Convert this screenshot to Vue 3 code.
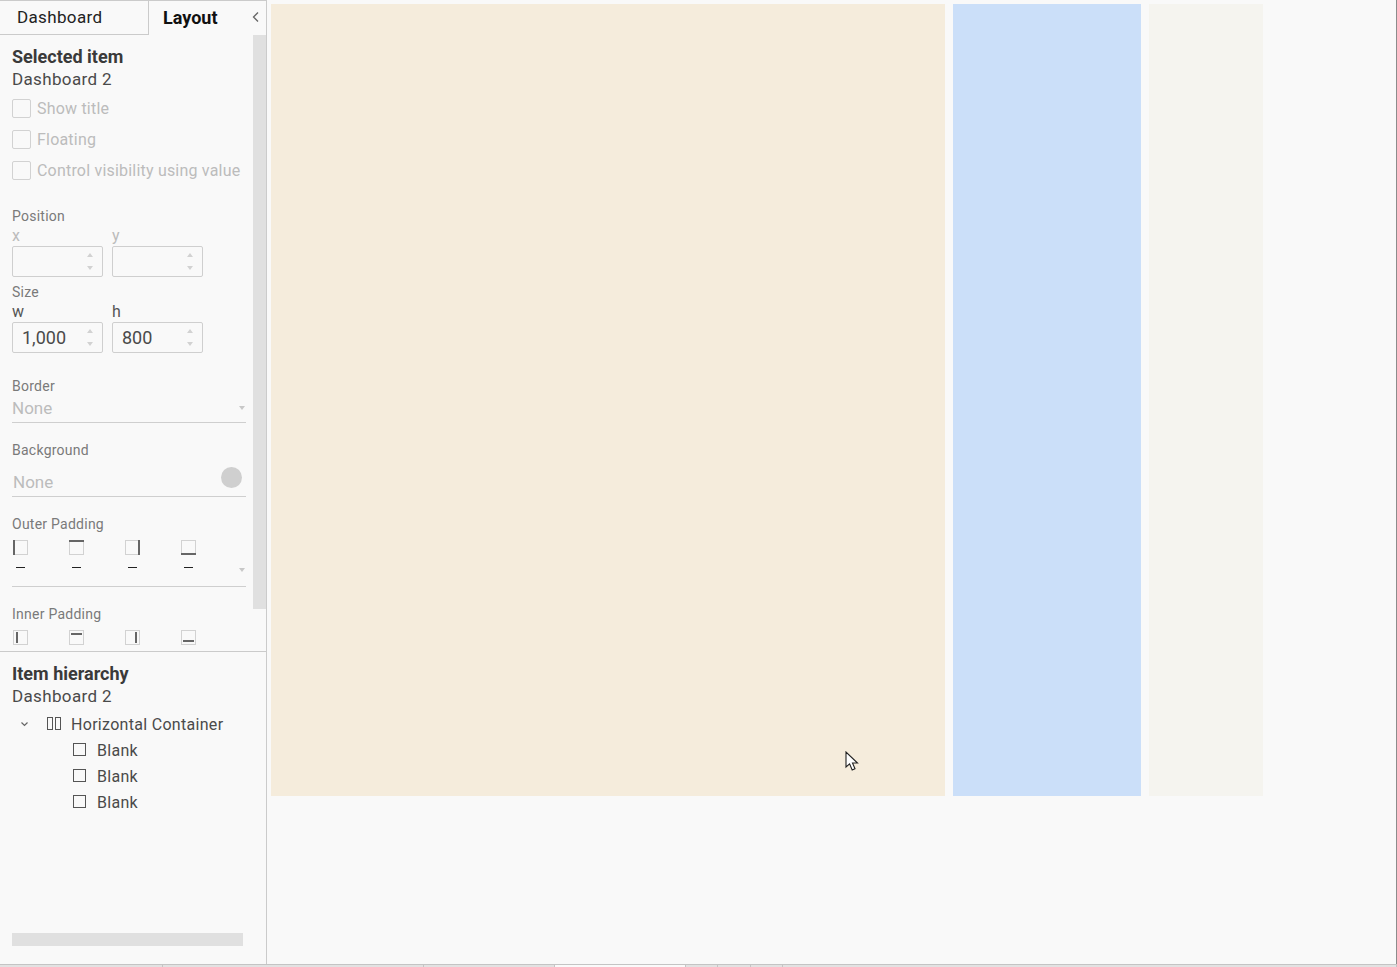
<template>
  <div class="page">
    <div class="main">
      <aside class="sidebar">
        <div class="tabs">
          <div class="tab tab-off">Dashboard</div>
          <div class="tab tab-on">Layout</div>
          <svg class="collapse" width="8" height="12" viewBox="0 0 8 12">
            <path d="M6 1.5 L1.5 6 L6 10.5" fill="none" stroke="#666" stroke-width="1.3" />
          </svg>
        </div>

        <div class="props">
          <div class="props-body">
            <div class="heading">Selected item</div>
            <div class="sub">Dashboard 2</div>

            <div class="checks">
              <label v-for="c in checks" :key="c" class="check">
                <span class="box"></span>
                <span>{{ c }}</span>
              </label>
            </div>

            <div class="label label-position">Position</div>
            <div class="pair pair-first">
              <div v-for="f in position" :key="f.name" class="field">
                <div class="field-name muted">{{ f.name }}</div>
                <div class="spin">
                  <span class="spin-val"></span>
                  <span class="arrows"><i class="up"></i><i class="down"></i></span>
                </div>
              </div>
            </div>

            <div class="label label-size">Size</div>
            <div class="pair pair-first">
              <div v-for="f in size" :key="f.name" class="field">
                <div class="field-name">{{ f.name }}</div>
                <div class="spin">
                  <span class="spin-val">{{ f.value }}</span>
                  <span class="arrows"><i class="up"></i><i class="down"></i></span>
                </div>
              </div>
            </div>

            <div class="label label-border">Border</div>
            <div class="select select-border">
              <span>None</span>
              <i class="caret"></i>
            </div>

            <div class="label label-gap">Background</div>
            <div class="select select-bg">
              <span class="bg-none">None</span>
              <span class="swatch"></span>
            </div>

            <div class="label label-gap">Outer Padding</div>
            <div class="pad-icons">
              <svg v-for="p in outerPad" :key="p" width="15" height="15" viewBox="0 0 15 15">
                <rect x="0.5" y="0.5" width="14" height="14" fill="none" stroke="#aaa" stroke-dasharray="1 1" />
                <path :d="p" stroke="#666" stroke-width="2" fill="none" />
              </svg>
            </div>
            <div class="pad-values">
              <span v-for="n in 4" :key="n" class="dash"></span>
              <i class="caret pad-caret"></i>
            </div>

            <div class="label label-gap">Inner Padding</div>
            <div class="pad-icons">
              <svg v-for="p in innerPad" :key="p" width="15" height="15" viewBox="0 0 15 15">
                <rect x="0.5" y="0.5" width="14" height="14" fill="none" stroke="#aaa" stroke-dasharray="1 1" />
                <path :d="p" stroke="#666" stroke-width="2" fill="none" />
              </svg>
            </div>
          </div>
          <div class="scroll-y"></div>
        </div>

        <div class="hierarchy">
          <div class="heading">Item hierarchy</div>
          <div class="sub">Dashboard 2</div>
          <div class="tree">
            <div class="tree-row">
              <svg class="tree-chevron" width="7" height="5" viewBox="0 0 7 5">
                <path d="M0.5 0.5 L3.5 3.5 L6.5 0.5" fill="none" stroke="#666" stroke-width="1.2" />
              </svg>
              <svg class="tree-columns" width="14" height="13" viewBox="0 0 14 13">
                <rect x="0.5" y="0.5" width="5" height="12" fill="none" stroke="#555" />
                <rect x="8.5" y="0.5" width="5" height="12" fill="none" stroke="#555" />
              </svg>
              <span>Horizontal Container</span>
            </div>
            <div v-for="n in 3" :key="n" class="tree-row tree-leaf">
              <span class="leaf-box"></span>
              <span>Blank</span>
            </div>
          </div>
        </div>

        <div class="scroll-x"></div>
      </aside>

      <section class="canvas">
        <div class="frame">
          <div class="block block-tan"></div>
          <div class="block block-blue"></div>
          <div class="block block-pale"></div>
        </div>
        <svg class="cursor" width="15" height="21" viewBox="0 0 15 21">
          <path d="M1 1 L1 16 L4.6 12.8 L7.2 19 L10 17.8 L7.5 12 L12.5 12 Z" fill="#fff" stroke="#222" stroke-width="1.1" stroke-linejoin="miter" />
        </svg>
      </section>
    </div>

    <div class="strip">
      <span v-for="t in sheetTabs" :key="t.id" class="strip-tab" :class="{ active: t.active }" :style="{ width: t.w + 'px' }"></span>
    </div>
  </div>
</template>

<script setup>
const checks = ['Show title', 'Floating', 'Control visibility using value']
const position = [{ name: 'x' }, { name: 'y' }]
const size = [
  { name: 'w', value: '1,000' },
  { name: 'h', value: '800' },
]
const outerPad = ['M1 0 V15', 'M0 1 H15', 'M14 0 V15', 'M0 14 H15']
const innerPad = ['M4 2 V13', 'M2 4 H13', 'M11 2 V13', 'M2 11 H13']
const sheetTabs = [
  { id: 1, w: 163 },
  { id: 2, w: 261 },
  { id: 3, w: 131 },
  { id: 4, w: 131, active: true },
  { id: 5, w: 32 },
  { id: 6, w: 33 },
  { id: 7, w: 32 },
  { id: 8, w: 614 },
]
</script>

<style>
html,
body {
  margin: 0;
  background: #f9f9f9;
  overflow: hidden;
}
</style>

<style scoped>
.page {
  height: 967px;
  display: flex;
  flex-direction: column;
  background: #f9f9f9;
  font-family: Roboto, "Liberation Sans", sans-serif;
  color: #444;
}

.main {
  flex: 1;
  display: flex;
  min-height: 0;
  border-right: 1px solid #8c8c8c;
}

.sidebar {
  width: 266px;
  flex: none;
  display: flex;
  flex-direction: column;
  border-right: 1px solid #cbcbcb;
}

.tabs {
  height: 34px;
  flex: none;
  display: flex;
  position: relative;
  border-top: 1px solid #cbcbcb;
}

.tab {
  font-size: 17px;
  line-height: 33px;
}

.tab-off {
  width: 131px;
  padding-left: 17px;
  border-right: 1px solid #cbcbcb;
  border-bottom: 1px solid #cbcbcb;
  color: #222;
  letter-spacing: 0.35px;
}

.tab-on {
  padding-left: 14px;
  font-size: 18px;
  font-weight: 700;
  color: #111;
}

.collapse {
  position: absolute;
  right: 6px;
  top: 10px;
}

.props {
  height: 616px;
  flex: none;
  display: flex;
  overflow: hidden;
  border-bottom: 1px solid #cbcbcb;
}

.props-body {
  flex: 1;
  padding: 11px 7px 0 12px;
}

.scroll-y {
  width: 13px;
  height: 574px;
  flex: none;
  background: #e0e0e0;
}

.heading {
  font-size: 18px;
  font-weight: 700;
  line-height: 22px;
  color: #3a3a3a;
}

.sub {
  font-size: 17px;
  line-height: 22px;
  color: #4a4a4a;
  letter-spacing: 0.35px;
}

.checks {
  margin-top: 9px;
  display: flex;
  flex-direction: column;
  gap: 12px;
}

.check {
  display: flex;
  align-items: center;
  gap: 6px;
  height: 19px;
  font-size: 16px;
  letter-spacing: 0.2px;
  color: #bcbcbc;
  white-space: nowrap;
}

.box {
  width: 17px;
  height: 17px;
  border: 1px solid #d2d2d2;
  border-radius: 2px;
}

.label {
  font-size: 14px;
  line-height: 18px;
  letter-spacing: 0.25px;
  color: #7a7a7a;
}

.label-position {
  margin-top: 27px;
}

.label-size {
  margin-top: 6px;
}

.label-border {
  margin-top: 24px;
}

.label-gap {
  margin-top: 18px;
}

.pair {
  display: flex;
  gap: 9px;
}

.pair-first {
  margin-top: 2px;
}

.field {
  width: 91px;
}

.field-name {
  font-size: 16px;
  line-height: 18px;
  margin-bottom: 1px;
  color: #555;
}

.field-name.muted {
  color: #bcbcbc;
}

.spin {
  height: 29px;
  border: 1px solid #cfcfcf;
  border-radius: 2px;
  display: flex;
  align-items: center;
  justify-content: space-between;
  padding: 0 9px 0 9px;
  font-size: 18px;
  color: #4a4a4a;
}

.arrows {
  display: flex;
  flex-direction: column;
  gap: 9px;
}

.up,
.down,
.caret {
  display: block;
  width: 0;
  height: 0;
  border-left: 3.5px solid transparent;
  border-right: 3.5px solid transparent;
}

.up {
  border-bottom: 4px solid #d2d2d2;
}

.down {
  border-top: 4px solid #d2d2d2;
}

.caret {
  border-top: 4px solid #c8c8c8;
}

.select {
  display: flex;
  justify-content: space-between;
  align-items: center;
  border-bottom: 1px solid #cfcfcf;
  font-size: 17px;
  line-height: 22px;
  color: #bcbcbc;
}

.select-border {
  margin-top: 2px;
  padding: 0 1px 3px 0;
}

.select-bg {
  margin-top: 12px;
  padding: 0 4px 3px 1px;
}

.swatch {
  width: 21px;
  height: 21px;
  border-radius: 50%;
  background: #cfcfcf;
  margin-top: -10px;
}

.pad-icons {
  margin: 7px 0 0 1px;
  height: 15px;
  display: flex;
  gap: 41px;
}

.pad-icons svg {
  display: block;
}

.pad-values {
  height: 32px;
  position: relative;
  display: flex;
  gap: 47px;
  padding: 12px 0 0 4px;
  box-sizing: border-box;
  border-bottom: 1px solid #cfcfcf;
}

.dash {
  width: 9px;
  height: 1px;
  background: #222;
}

.pad-caret {
  position: absolute;
  right: 1px;
  top: 13px;
}

.hierarchy {
  padding: 11px 0 0 12px;
}

.tree {
  margin-top: 4px;
}

.tree-row {
  height: 26px;
  display: flex;
  align-items: center;
  font-size: 16px;
  letter-spacing: 0.3px;
  color: #4a4a4a;
  position: relative;
  padding-left: 59px;
}

.tree-chevron {
  position: absolute;
  left: 9px;
  top: 11px;
}

.tree-columns {
  position: absolute;
  left: 35px;
  top: 6px;
}

.tree-leaf {
  padding-left: 61px;
  gap: 11px;
}

.leaf-box {
  width: 11px;
  height: 11px;
  border: 1px solid #555;
  margin-bottom: 2px;
}

.scroll-x {
  margin: auto 23px 18px 12px;
  height: 13px;
  background: #e0e0e0;
}

.canvas {
  flex: 1;
  position: relative;
  padding: 4px 0 0 4px;
}

.frame {
  display: flex;
  gap: 8px;
  height: 792px;
}

.block {
  height: 100%;
}

.block-tan {
  width: 674px;
  background: #f5ecdc;
}

.block-blue {
  width: 188px;
  background: #cbdff9;
}

.block-pale {
  width: 114px;
  background: #f5f4ef;
}

.cursor {
  position: absolute;
  left: 578px;
  top: 751px;
}

.strip {
  height: 3px;
  flex: none;
  display: flex;
  background: #cbcbcb;
  border-top: 1px solid #c4c4c4;
  box-sizing: border-box;
}

.strip-tab {
  height: 100%;
  background: #e2e2e2;
  border-right: 1px solid #c4c4c4;
  box-sizing: border-box;
  flex: none;
}

.strip-tab.active {
  background: #fafafa;
}
</style>
